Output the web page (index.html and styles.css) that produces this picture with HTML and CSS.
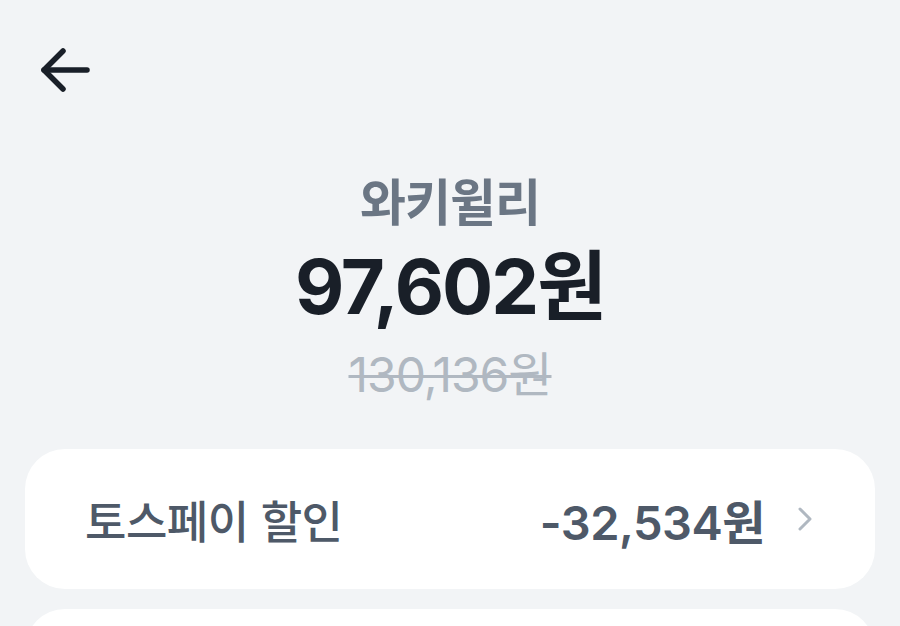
FILE: index.html
```html
<!DOCTYPE html>
<html lang="ko">
<head>
    <meta charset="UTF-8">
    <meta name="viewport" content="width=device-width, initial-scale=1.0">
    <title>결제 상세</title>
    <link rel="stylesheet" href="styles.css">
</head>
<body>
    <header class="top-bar">
        <button class="back-btn" aria-label="뒤로가기">
            <svg width="50" height="44" viewBox="0 0 50 44" fill="none" stroke="#191f28" stroke-width="5.5" stroke-linecap="round" stroke-linejoin="round">
                <path d="M47 22H4"/>
                <path d="M23 3L4 22L23 41"/>
            </svg>
        </button>
    </header>

    <section class="summary">
        <div class="store-name">와키윌리</div>
        <div class="final-price">97,602원</div>
        <div class="original-price">130,136원</div>
    </section>

    <div class="card">
        <span class="row-label">토스페이 할인</span>
        <span class="row-value">-32,534원</span>
        <svg class="chevron" width="16" height="26" viewBox="0 0 16 26" fill="none" stroke="#b0b8c1" stroke-width="3" stroke-linecap="round" stroke-linejoin="round">
            <path d="M3 3L13 13L3 23"/>
        </svg>
    </div>
    <div class="card card-next"></div>
</body>
</html>
```

FILE: styles.css
```css
body {
    margin: 0;
    background-color: #f2f4f6;
    font-family: "Noto Sans CJK KR", "Noto Sans", sans-serif;
    color: #191f28;
    overflow: hidden;
}
.top-bar {
    padding: 48px 0 0 40px;
    height: 60px;
}
.back-btn {
    background: none;
    border: none;
    padding: 0;
    cursor: pointer;
}
.summary {
    display: flex;
    flex-direction: column;
    align-items: center;
    margin-top: 61px;
}
.store-name {
    font-size: 50px;
    font-weight: 600;
    line-height: 60px;
    color: #6b7684;
    letter-spacing: -1px;
}
.final-price {
    font-family: "Inter", "Noto Sans CJK KR", sans-serif;
    font-size: 76px;
    font-weight: 700;
    line-height: 90px;
    margin-top: 12px;
    letter-spacing: -2px;
}
.original-price {
    font-family: "Inter", "Noto Sans CJK KR", sans-serif;
    font-size: 48px;
    font-weight: 400;
    line-height: 56px;
    margin-top: 16px;
    color: #b0b8c1;
    text-decoration: line-through;
    text-decoration-thickness: 3px;
    letter-spacing: -1px;
}
.card {
    background-color: #ffffff;
    border-radius: 40px;
    margin: 0 25px;
    height: 140px;
    display: flex;
    align-items: center;
    padding: 0 62px 0 60px;
    margin-top: 46px;
}
.row-label {
    font-size: 45px;
    font-weight: 500;
    color: #4e5968;
    letter-spacing: -0.5px;
}
.row-value {
    margin-left: auto;
    font-family: "Inter", "Noto Sans CJK KR", sans-serif;
    font-size: 47px;
    font-weight: 600;
    color: #4e5968;
    letter-spacing: -0.5px;
}
.chevron {
    margin-left: 32px;
}
.card-next {
    margin-top: 20px;
}
```
